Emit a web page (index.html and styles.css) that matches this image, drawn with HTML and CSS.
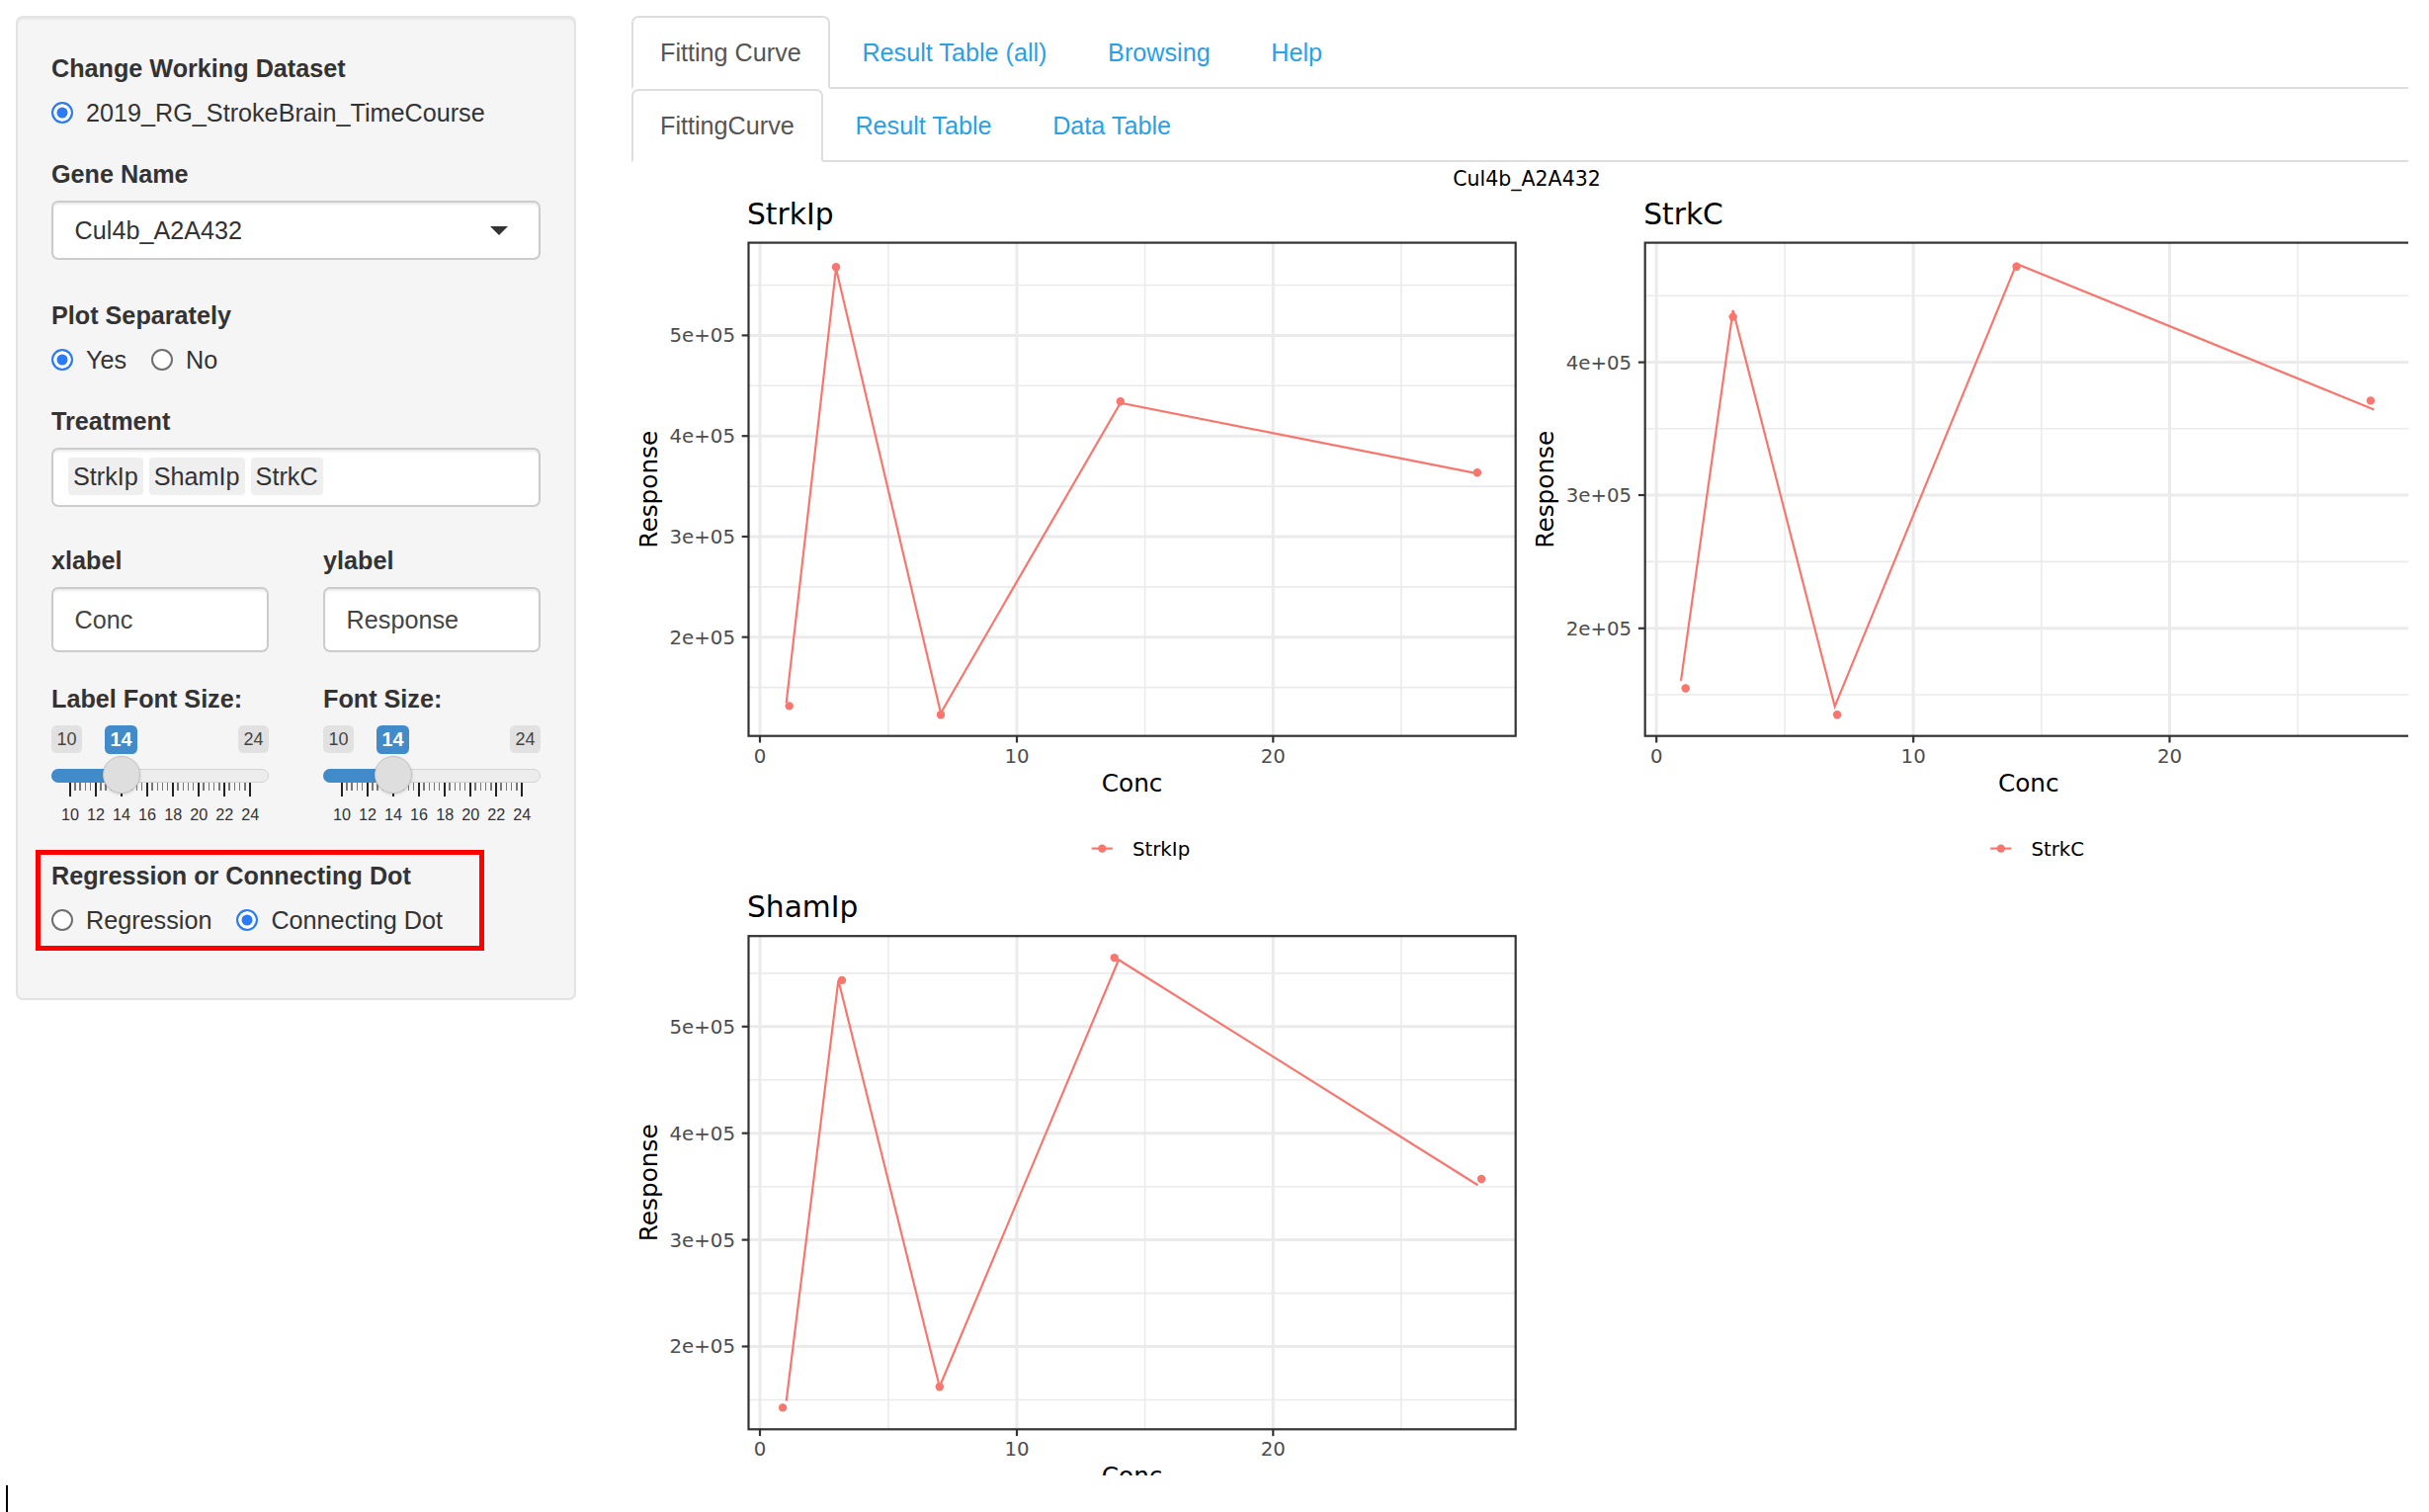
FILE: index.html
```html
<!DOCTYPE html>
<html lang="en">
<head>
<meta charset="utf-8">
<title>Fitting Curve</title>
<link rel="stylesheet" href="styles.css">
</head>
<body>
<div class="page">
  <aside class="well">
    <div class="form-group">
      <label class="control-label">Change Working Dataset</label>
      <div class="radio-group">
        <label class="radio-opt"><input type="radio" name="ds" checked><span>2019_RG_StrokeBrain_TimeCourse</span></label>
      </div>
    </div>
    <div class="form-group">
      <label class="control-label">Gene Name</label>
      <div class="select-box"><span>Cul4b_A2A432</span><span class="caret"></span></div>
    </div>
    <div class="form-group">
      <label class="control-label">Plot Separately</label>
      <div class="radio-group">
        <label class="radio-opt"><input type="radio" name="sep" checked><span>Yes</span></label>
        <label class="radio-opt"><input type="radio" name="sep"><span>No</span></label>
      </div>
    </div>
    <div class="form-group">
      <label class="control-label">Treatment</label>
      <div class="multi-box"><span class="chip">StrkIp</span><span class="chip">ShamIp</span><span class="chip">StrkC</span></div>
    </div>
    <div class="form-row">
      <div class="form-group">
        <label class="control-label">xlabel</label>
        <div class="text-input">Conc</div>
      </div>
      <div class="form-group">
        <label class="control-label">ylabel</label>
        <div class="text-input">Response</div>
      </div>
    </div>
    <div class="form-row">
      <div class="form-group">
        <label class="control-label">Label Font Size:</label>
        <div class="slider">
          <span class="irs-line"></span>
          <span class="irs-bar"></span>
          <span class="irs-ticks"></span>
          <div class="irs-grid-text"><span>10</span><span>12</span><span>14</span><span>16</span><span>18</span><span>20</span><span>22</span><span>24</span></div>
          <span class="irs-handle"></span>
          <span class="irs-min">10</span>
          <span class="irs-max">24</span>
          <span class="irs-single">14</span>
        </div>
      </div>
      <div class="form-group">
        <label class="control-label">Font Size:</label>
        <div class="slider">
          <span class="irs-line"></span>
          <span class="irs-bar"></span>
          <span class="irs-ticks"></span>
          <div class="irs-grid-text"><span>10</span><span>12</span><span>14</span><span>16</span><span>18</span><span>20</span><span>22</span><span>24</span></div>
          <span class="irs-handle"></span>
          <span class="irs-min">10</span>
          <span class="irs-max">24</span>
          <span class="irs-single">14</span>
        </div>
      </div>
    </div>
    <div class="form-group last">
      <label class="control-label">Regression or Connecting Dot</label>
      <div class="radio-group">
        <label class="radio-opt"><input type="radio" name="reg"><span>Regression</span></label>
        <label class="radio-opt"><input type="radio" name="reg" checked><span>Connecting Dot</span></label>
      </div>
    </div>
    <div class="annot-box"></div>
  </aside>

  <main class="main">
    <ul class="nav-tabs">
      <li class="active"><a href="#">Fitting Curve</a></li>
      <li><a href="#">Result Table (all)</a></li>
      <li><a href="#">Browsing</a></li>
      <li><a href="#">Help</a></li>
    </ul>
    <ul class="nav-tabs">
      <li class="active"><a href="#">FittingCurve</a></li>
      <li><a href="#">Result Table</a></li>
      <li><a href="#">Data Table</a></li>
    </ul>
    <div class="plot">
      <svg class="plot-svg" width="1814" height="1328" viewBox="0 0 1814 1328" xmlns="http://www.w3.org/2000/svg">
        <defs>
          <g id="vgrid">
            <line class="gmin" x1="260" y1="80.6" x2="260" y2="579.7"/>
            <line class="gmin" x1="519.6" y1="80.6" x2="519.6" y2="579.7"/>
            <line class="gmin" x1="779" y1="80.6" x2="779" y2="579.7"/>
            <line class="gmaj" x1="130" y1="80.6" x2="130" y2="579.7"/>
            <line class="gmaj" x1="390" y1="80.6" x2="390" y2="579.7"/>
            <line class="gmaj" x1="649.3" y1="80.6" x2="649.3" y2="579.7"/>
          </g>
          <g id="frame">
            <rect class="pborder" x="118.5" y="80.6" width="776.2" height="499.1"/>
            <line class="tick" x1="130" y1="579.7" x2="130" y2="586.5"/>
            <line class="tick" x1="390" y1="579.7" x2="390" y2="586.5"/>
            <line class="tick" x1="649.3" y1="579.7" x2="649.3" y2="586.5"/>
            <text class="axt" x="130" y="606.5" text-anchor="middle">0</text>
            <text class="axt" x="390" y="606.5" text-anchor="middle">10</text>
            <text class="axt" x="649.3" y="606.5" text-anchor="middle">20</text>
            <text class="axtitle" x="506.6" y="635.5" text-anchor="middle">Conc</text>
            <text class="axtitle" transform="translate(26 330.2) rotate(-90)" text-anchor="middle">Response</text>
          </g>
        </defs>

        <text class="suptitle" x="906" y="23" text-anchor="middle">Cul4b_A2A432</text>

        <!-- Panel StrkIp -->
        <g>
          <line class="gmin" x1="118.5" x2="894.7" y1="123.5" y2="123.5"/>
          <line class="gmin" x1="118.5" x2="894.7" y1="225.3" y2="225.3"/>
          <line class="gmin" x1="118.5" x2="894.7" y1="327.1" y2="327.1"/>
          <line class="gmin" x1="118.5" x2="894.7" y1="428.9" y2="428.9"/>
          <line class="gmin" x1="118.5" x2="894.7" y1="530.6" y2="530.6"/>
          <line class="gmaj" x1="118.5" x2="894.7" y1="174.4" y2="174.4"/>
          <line class="gmaj" x1="118.5" x2="894.7" y1="276.2" y2="276.2"/>
          <line class="gmaj" x1="118.5" x2="894.7" y1="378" y2="378"/>
          <line class="gmaj" x1="118.5" x2="894.7" y1="479.7" y2="479.7"/>
          <use href="#vgrid"/>
          <polyline class="dline" points="156.7,546.3 207,106.5 313,556.5 494.8,242.7 855.9,314.1"/>
          <circle class="dpt" cx="159.7" cy="549.4" r="4.2"/>
          <circle class="dpt" cx="207" cy="105.2" r="4.2"/>
          <circle class="dpt" cx="313" cy="558.3" r="4.2"/>
          <circle class="dpt" cx="494.8" cy="241.3" r="4.2"/>
          <circle class="dpt" cx="855.9" cy="313.2" r="4.2"/>
          <use href="#frame"/>
          <line class="tick" x1="111.7" x2="118.5" y1="174.4" y2="174.4"/>
          <line class="tick" x1="111.7" x2="118.5" y1="276.2" y2="276.2"/>
          <line class="tick" x1="111.7" x2="118.5" y1="378" y2="378"/>
          <line class="tick" x1="111.7" x2="118.5" y1="479.7" y2="479.7"/>
          <text class="axt" x="105" y="181.4" text-anchor="end">5e+05</text>
          <text class="axt" x="105" y="283.2" text-anchor="end">4e+05</text>
          <text class="axt" x="105" y="385" text-anchor="end">3e+05</text>
          <text class="axt" x="105" y="486.7" text-anchor="end">2e+05</text>
          <text class="ptitle" x="117" y="61.9">StrkIp</text>
          <line class="dline" x1="465.7" x2="486.9" y1="693.6" y2="693.6"/>
          <circle class="dpt" cx="476.3" cy="693.6" r="4.2"/>
          <text class="legt" x="506.9" y="700.8">StrkIp</text>
        </g>

        <!-- Panel StrkC -->
        <g transform="translate(907.2 0)">
          <line class="gmin" x1="118.5" x2="894.7" y1="134.3" y2="134.3"/>
          <line class="gmin" x1="118.5" x2="894.7" y1="268.8" y2="268.8"/>
          <line class="gmin" x1="118.5" x2="894.7" y1="403.4" y2="403.4"/>
          <line class="gmin" x1="118.5" x2="894.7" y1="538" y2="538"/>
          <line class="gmaj" x1="118.5" x2="894.7" y1="201.6" y2="201.6"/>
          <line class="gmaj" x1="118.5" x2="894.7" y1="336" y2="336"/>
          <line class="gmaj" x1="118.5" x2="894.7" y1="470.8" y2="470.8"/>
          <use href="#vgrid"/>
          <polyline class="dline" points="154.8,523.9 207.5,148.9 310.5,549.8 494.4,102 856.2,249.4"/>
          <circle class="dpt" cx="159.5" cy="531.5" r="4.2"/>
          <circle class="dpt" cx="207.5" cy="155.6" r="4.2"/>
          <circle class="dpt" cx="312.9" cy="558.3" r="4.2"/>
          <circle class="dpt" cx="494.4" cy="104.7" r="4.2"/>
          <circle class="dpt" cx="852.7" cy="240.4" r="4.2"/>
          <use href="#frame"/>
          <line class="tick" x1="111.7" x2="118.5" y1="201.6" y2="201.6"/>
          <line class="tick" x1="111.7" x2="118.5" y1="336" y2="336"/>
          <line class="tick" x1="111.7" x2="118.5" y1="470.8" y2="470.8"/>
          <text class="axt" x="105" y="208.6" text-anchor="end">4e+05</text>
          <text class="axt" x="105" y="343" text-anchor="end">3e+05</text>
          <text class="axt" x="105" y="477.8" text-anchor="end">2e+05</text>
          <text class="ptitle" x="117" y="61.9">StrkC</text>
          <line class="dline" x1="468" x2="489.2" y1="693.6" y2="693.6"/>
          <circle class="dpt" cx="478.6" cy="693.6" r="4.2"/>
          <text class="legt" x="509.2" y="700.8">StrkC</text>
        </g>

        <!-- Panel ShamIp -->
        <g transform="translate(0 701.6)">
          <line class="gmin" x1="118.5" x2="894.7" y1="118.3" y2="118.3"/>
          <line class="gmin" x1="118.5" x2="894.7" y1="226.2" y2="226.2"/>
          <line class="gmin" x1="118.5" x2="894.7" y1="334.1" y2="334.1"/>
          <line class="gmin" x1="118.5" x2="894.7" y1="442" y2="442"/>
          <line class="gmin" x1="118.5" x2="894.7" y1="549.9" y2="549.9"/>
          <line class="gmaj" x1="118.5" x2="894.7" y1="172.2" y2="172.2"/>
          <line class="gmaj" x1="118.5" x2="894.7" y1="280.1" y2="280.1"/>
          <line class="gmaj" x1="118.5" x2="894.7" y1="388" y2="388"/>
          <line class="gmaj" x1="118.5" x2="894.7" y1="495.9" y2="495.9"/>
          <use href="#vgrid"/>
          <polyline class="dline" points="156.7,551.1 209.4,125.3 311.8,536.6 493,104.6 856.5,332.6"/>
          <circle class="dpt" cx="153.1" cy="557.8" r="4.2"/>
          <circle class="dpt" cx="213" cy="125.3" r="4.2"/>
          <circle class="dpt" cx="311.8" cy="536.6" r="4.2"/>
          <circle class="dpt" cx="488.7" cy="102.5" r="4.2"/>
          <circle class="dpt" cx="860.1" cy="326.4" r="4.2"/>
          <use href="#frame"/>
          <line class="tick" x1="111.7" x2="118.5" y1="172.2" y2="172.2"/>
          <line class="tick" x1="111.7" x2="118.5" y1="280.1" y2="280.1"/>
          <line class="tick" x1="111.7" x2="118.5" y1="388" y2="388"/>
          <line class="tick" x1="111.7" x2="118.5" y1="495.9" y2="495.9"/>
          <text class="axt" x="105" y="179.2" text-anchor="end">5e+05</text>
          <text class="axt" x="105" y="287.1" text-anchor="end">4e+05</text>
          <text class="axt" x="105" y="395" text-anchor="end">3e+05</text>
          <text class="axt" x="105" y="502.9" text-anchor="end">2e+05</text>
          <text class="ptitle" x="117" y="61.9">ShamIp</text>
          <line class="dline" x1="465.7" x2="486.9" y1="693.6" y2="693.6"/>
          <circle class="dpt" cx="476.3" cy="693.6" r="4.2"/>
          <text class="legt" x="506.9" y="700.8">ShamIp</text>
        </g>
      </svg>
    </div>
  </main>
</div>
<div class="cursor"></div>
</body>
</html>
```

FILE: styles.css
```css
html, body {
  margin: 0;
  padding: 0;
  background: #fff;
}

body {
  width: 2458px;
  height: 1530px;
  overflow: hidden;
  position: relative;
  font-family: "Liberation Sans", Arial, Helvetica, sans-serif;
  font-size: 25.2px;
  line-height: 36px;
  color: #333;
}

.page {
  display: flex;
  align-items: flex-start;
  padding: 16px 0 0 16px;
}

/* ---------- sidebar ---------- */
.well {
  flex: none;
  position: relative;
  width: 567px;
  box-sizing: border-box;
  margin-right: 56px;
  padding: 33px 34px 62px;
  background: #f5f5f5;
  border: 2px solid #e3e3e3;
  border-radius: 7px;
  box-shadow: inset 0 2px 2px rgba(0, 0, 0, 0.05);
}

.form-group {
  display: flow-root;
  margin-bottom: 27px;
}

.form-group.last {
  margin-bottom: 0;
}

.control-label {
  display: block;
  font-weight: bold;
  margin-bottom: 9px;
  line-height: 36px;
}

.radio-group {
  display: flex;
  gap: 25px;
  height: 36px;
  margin-bottom: -1px;
}

.radio-opt {
  display: inline-flex;
  align-items: center;
  height: 36px;
  color: #333;
  white-space: nowrap;
}

.radio-opt input {
  -webkit-appearance: none;
  appearance: none;
  flex: none;
  box-sizing: border-box;
  width: 22px;
  height: 22px;
  margin: 0 13px 0 0;
  border: 2px solid #6f6f6f;
  border-radius: 50%;
  background: #fff;
}

.radio-opt input:checked {
  border: 2.5px solid #2b7bf3;
  background: #2b7bf3;
  box-shadow: inset 0 0 0 3.5px #fff;
}

.select-box {
  display: flex;
  align-items: center;
  justify-content: space-between;
  box-sizing: border-box;
  height: 60px;
  margin-bottom: 11px;
  padding: 0 31px 0 21.6px;
  background: #fff;
  border: 2px solid #ccc;
  border-radius: 7px;
  box-shadow: inset 0 2px 2px rgba(0, 0, 0, 0.075);
  color: #333;
}

.caret {
  width: 0;
  height: 0;
  border-top: 9px solid #333;
  border-left: 9px solid transparent;
  border-right: 9px solid transparent;
}

.multi-box {
  display: flex;
  align-items: flex-start;
  gap: 6px;
  box-sizing: border-box;
  height: 60px;
  margin-bottom: 9px;
  padding: 8px 15px 0;
  background: #fff;
  border: 2px solid #ccc;
  border-radius: 7px;
  box-shadow: inset 0 2px 2px rgba(0, 0, 0, 0.075);
}

.chip {
  height: 38px;
  line-height: 38px;
  padding: 0 5px;
  background: #efefef;
  border-radius: 4px;
  color: #333;
}

.form-row {
  display: grid;
  grid-template-columns: 220px 220px;
  column-gap: 55px;
}

.text-input {
  box-sizing: border-box;
  height: 66px;
  line-height: 62px;
  margin-bottom: 2px;
  padding: 0 21.6px;
  background: #fff;
  border: 2px solid #ccc;
  border-radius: 7px;
  box-shadow: inset 0 2px 2px rgba(0, 0, 0, 0.075);
  color: #444;
}

/* slider */
.slider {
  position: relative;
  height: 107px;
}

.irs-line {
  position: absolute;
  left: 0;
  right: 0;
  top: 44px;
  height: 14px;
  box-sizing: border-box;
  background: #ededed;
  border: 1.5px solid #d3d3d3;
  border-radius: 7px;
}

.irs-bar {
  position: absolute;
  left: 0;
  top: 44px;
  width: 72px;
  height: 14px;
  background: #428bca;
  border-radius: 7px 0 0 7px;
}

.irs-ticks {
  position: absolute;
  left: 18px;
  top: 58px;
  width: 185px;
  height: 14px;
  background:
    repeating-linear-gradient(90deg, #222 0 2px, transparent 2px 26.04px) 0 0 / 100% 14px no-repeat,
    repeating-linear-gradient(90deg, #777 0 1.5px, transparent 1.5px 5.208px) 0 0 / 100% 8px no-repeat;
}

.irs-grid-text {
  position: absolute;
  left: 6px;
  top: 81px;
  width: 208.3px;
  display: flex;
}

.irs-grid-text span {
  flex: 1;
  text-align: center;
  font-size: 16.2px;
  line-height: 18px;
  color: #333;
}

.irs-handle {
  position: absolute;
  left: 51.5px;
  top: 31px;
  width: 38px;
  height: 38px;
  box-sizing: border-box;
  border-radius: 50%;
  background: #dedede;
  border: 1.8px solid #c3c3c3;
  box-shadow: 0 1px 3px rgba(0, 0, 0, 0.15);
}

.irs-min,
.irs-max {
  position: absolute;
  top: 0;
  font-size: 18px;
  line-height: 24px;
  padding: 2px 5.4px;
  background: #e1e1e1;
  color: #444;
  border-radius: 5.4px;
}

.irs-min { left: 0; }
.irs-max { right: 0; }

.irs-single {
  position: absolute;
  top: 0;
  left: 54px;
  font-size: 19.8px;
  font-weight: bold;
  line-height: 25.4px;
  padding: 1.8px 5.4px;
  background: #428bca;
  color: #fff;
  border-radius: 5.4px;
}

.annot-box {
  position: absolute;
  left: 17.6px;
  top: 842px;
  width: 454.4px;
  height: 101.5px;
  box-sizing: border-box;
  border: 5.5px solid #ff0000;
  pointer-events: none;
}

/* ---------- main panel ---------- */
.main {
  flex: none;
  width: 1798px;
  overflow: hidden;
}

.nav-tabs {
  display: flex;
  list-style: none;
  margin: 0;
  padding: 0;
  border-bottom: 2px solid #ddd;
}

.nav-tabs li {
  margin: 0 3.6px -2px 0;
}

.nav-tabs a {
  display: block;
  padding: 17px 27px;
  line-height: 36px;
  font-size: 25.2px;
  border: 2px solid transparent;
  border-radius: 7px 7px 0 0;
  color: #2aa0e6;
  text-decoration: none;
}

.nav-tabs li.active a {
  color: #555;
  background: #fff;
  border-color: #ddd #ddd transparent;
}

.plot {
  margin-top: 1px;
  height: 1328px;
  overflow: hidden;
}

.plot-svg {
  display: block;
}

.gmin {
  stroke: #ebebeb;
  stroke-width: 1.6;
}

.gmaj {
  stroke: #ebebeb;
  stroke-width: 3;
}

.pborder {
  fill: none;
  stroke: #333;
  stroke-width: 2.2;
}

.tick {
  stroke: #333;
  stroke-width: 2.2;
}

.dline {
  fill: none;
  stroke: #f8766d;
  stroke-width: 2.2;
}

.dpt {
  fill: #f8766d;
}

.axt {
  font-family: "DejaVu Sans", sans-serif;
  font-size: 19.8px;
  fill: #4d4d4d;
}

.axtitle {
  font-family: "DejaVu Sans", sans-serif;
  font-size: 24.75px;
  fill: #000;
}

.ptitle {
  font-family: "DejaVu Sans", sans-serif;
  font-size: 29.7px;
  fill: #000;
}

.legt {
  font-family: "DejaVu Sans", sans-serif;
  font-size: 19.8px;
  fill: #000;
}

.suptitle {
  font-family: "DejaVu Sans", sans-serif;
  font-size: 20.5px;
  fill: #000;
}

.cursor {
  position: absolute;
  left: 5.5px;
  top: 1503px;
  width: 2.5px;
  height: 27px;
  background: #000;
}
```
